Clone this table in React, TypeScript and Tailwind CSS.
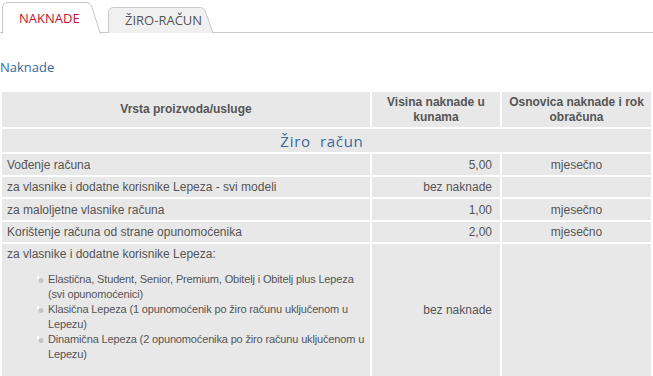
const tabFont = { fontFamily: '"Open Sans", "DejaVu Sans", sans-serif' };
const bodyFont = { fontFamily: '"Liberation Sans", Arial, sans-serif' };

type Row = { name: string; fee: string; basis: string };

const rows: Row[] = [
  { name: 'Vođenje računa', fee: '5,00', basis: 'mjesečno' },
  { name: 'za vlasnike i dodatne korisnike Lepeza - svi modeli', fee: 'bez naknade', basis: '' },
  { name: 'za maloljetne vlasnike računa', fee: '1,00', basis: 'mjesečno' },
  { name: 'Korištenje računa od strane opunomoćenika', fee: '2,00', basis: 'mjesečno' },
];

const lepezaModels = [
  'Elastična, Student, Senior, Premium, Obitelj i Obitelj plus Lepeza (svi opunomoćenici)',
  'Klasična Lepeza (1 opunomoćenik po žiro računu uključenom u Lepezu)',
  'Dinamična Lepeza (2 opunomoćenika po žiro računu uključenom u Lepezu)',
];

function Bullet() {
  return (
    <svg width="7" height="8" viewBox="0 0 7 8" className="shrink-0 mt-[4px]">
      <rect x="0" y="0" width="2" height="3" fill="#ffffff" />
      <circle cx="4" cy="4.5" r="2.5" fill="#c4c4c4" />
    </svg>
  );
}

function Tab({ label, active }: { label: string; active?: boolean }) {
  if (active) {
    return (
      <div className="relative w-[99px] h-[31px] mt-[2px] ml-[2px] flex items-center pl-[17px]">
        <svg className="absolute inset-0" width="99" height="32" viewBox="0 0 99 32">
          <path d="M0.5 32 L0.5 6 Q0.5 0.5 6 0.5 L84 0.5 Q88 0.5 89.5 4 L98.5 32" fill="#ffffff" stroke="#c9c9c9" />
        </svg>
        <span className="relative text-[13px] text-[#c41230] mt-[3px]" style={tabFont}>
          {label}
        </span>
      </div>
    );
  }
  return (
    <div className="relative w-[106px] h-[25px] mt-[7px] ml-[7px] flex items-center pl-[17px]">
      <svg className="absolute inset-0" width="106" height="26" viewBox="0 0 106 26">
        <path d="M0.5 26 L0.5 6 Q0.5 0.5 6 0.5 L92 0.5 Q95.5 0.5 97 3.5 L105 26" fill="#f0f0f0" stroke="#c9c9c9" />
      </svg>
      <span className="relative text-[13px] text-[#555555] mt-[2px]" style={tabFont}>
        {label}
      </span>
    </div>
  );
}

export default function App() {
  return (
    <div className="w-[653px] h-[376px] bg-white overflow-hidden">
      <div className="flex items-start h-[33px] border-b border-[#c9c9c9]">
        <div className="mb-[-1px] flex items-start">
          <Tab label="NAKNADE" active />
          <Tab label="ŽIRO-RAČUN" />
        </div>
      </div>

      <h2 className="text-[13px] text-[#3a699c] mt-[26px] leading-[16px]" style={tabFont}>
        Naknade
      </h2>

      <table
        className="w-[653px] table-fixed border-separate border-spacing-[2px] mt-[15px] text-[12px] text-[#555555]"
        style={bodyFont}
      >
        <colgroup>
          <col className="w-[368px]" />
          <col className="w-[128px]" />
          <col className="w-[149px]" />
        </colgroup>
        <thead>
          <tr>
            <th className="bg-[#e8e8e8] h-[35px] font-bold leading-[15px] text-center align-middle">
              Vrsta proizvoda/usluge
            </th>
            <th className="bg-[#e8e8e8] h-[35px] font-bold leading-[15px] text-center align-middle px-[8px]">
              Visina naknade u kunama
            </th>
            <th className="bg-[#e8e8e8] h-[35px] font-bold leading-[15px] text-center align-middle px-[4px]">
              Osnovica naknade i rok obračuna
            </th>
          </tr>
        </thead>
        <tbody>
          <tr>
            <td
              colSpan={3}
              className="bg-[#e8e8e8] h-[23px] text-center text-[15px] tracking-[0.7px] text-[#3a699c] leading-[18px]"
              style={tabFont}
            >
              {'Žiro\u00a0\u00a0račun\u00a0\u00a0'}
            </td>
          </tr>
          {rows.map((r, i) => (
            <tr key={r.name}>
              <td className={`bg-[#e8e8e8] pl-[5px] leading-[14px] ${i % 2 === 0 ? 'h-[21px]' : 'h-[20px]'}`}>
                {r.name}
              </td>
              <td className="bg-[#e8e8e8] pr-[8px] text-right leading-[14px]">{r.fee}</td>
              <td className="bg-[#e8e8e8] text-center leading-[14px]">{r.basis}</td>
            </tr>
          ))}
          <tr>
            <td className="bg-[#e8e8e8] pl-[5px] pr-0 pt-[3px] pb-[14px] leading-[15px] align-top">
              <div>za vlasnike i dodatne korisnike Lepeza:</div>
              <ul className="mt-[10px] ml-[30px] flex flex-col text-[11px] tracking-[-0.15px]">
                {lepezaModels.map((m) => (
                  <li key={m} className="flex gap-[4px]">
                    <Bullet />
                    <span>{m}</span>
                  </li>
                ))}
              </ul>
            </td>
            <td className="bg-[#e8e8e8] pr-[8px] text-right align-middle leading-[14px]">bez naknade</td>
            <td className="bg-[#e8e8e8]" />
          </tr>
        </tbody>
      </table>
    </div>
  );
}
